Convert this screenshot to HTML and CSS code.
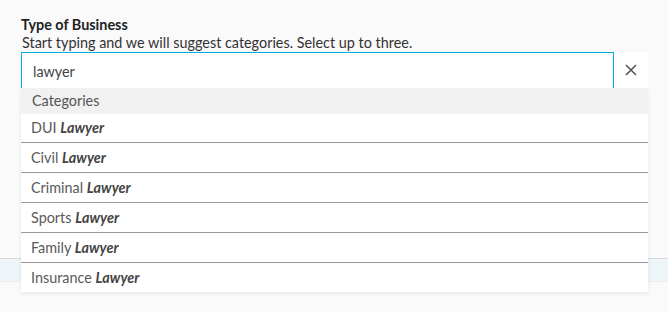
FILE: index.html
```html
<!DOCTYPE html>
<html>
<head>
<meta charset="utf-8">
<link rel="stylesheet" href="styles.css">
</head>
<body>
<div class="page">
  <div class="field">
    <div class="label">Type of Business</div>
    <div class="hint">Start typing and we will suggest categories. Select up to three.</div>
    <div class="combo">
      <div class="input-row">
        <div class="input">lawyer</div>
        <button class="clear" aria-label="Clear">
          <svg width="12" height="12" viewBox="0 0 12 12"><path d="M1 1L11 11M11 1L1 11" stroke="#555" stroke-width="1.6" fill="none"/></svg>
        </button>
      </div>
      <div class="menu">
        <div class="menu-head">Categories</div>
        <div class="opt">DUI <b>Lawyer</b></div>
        <div class="opt">Civil <b>Lawyer</b></div>
        <div class="opt">Criminal <b>Lawyer</b></div>
        <div class="opt">Sports <b>Lawyer</b></div>
        <div class="opt">Family <b>Lawyer</b></div>
        <div class="opt">Insurance <b>Lawyer</b></div>
      </div>
    </div>
  </div>
  <div class="band"></div>
</div>
</body>
</html>
```
FILE: styles.css
```css
html, body {
  margin: 0;
  padding: 0;
  background: #fafafa;
  font-family: "Lato", "Open Sans", sans-serif;
}
.page {
  width: 668px;
  height: 312px;
  overflow: hidden;
}
.field {
  padding: 16px 20px 0 21px;
}
.label {
  font-weight: 700;
  font-size: 14.4px;
  line-height: 18px;
  color: #222;
}
.hint {
  font-size: 14.4px;
  line-height: 18px;
  color: #333;
  margin-left: 1px;
}
.combo {
  position: relative;
  width: 627px;
}
.input-row {
  display: flex;
  height: 36px;
}
.input {
  flex: 1;
  box-sizing: border-box;
  border: 1px solid #00b0db;
  border-bottom: none;
  background: #fff;
  padding: 0 11px;
  font-size: 14.4px;
  line-height: 38px;
  color: #444;
}
.clear {
  width: 34px;
  height: 36px;
  border: 0;
  padding: 0;
  background: #fff;
  display: flex;
  align-items: center;
  justify-content: center;
}
.menu {
  position: absolute;
  left: 0;
  top: 36px;
  width: 627px;
  background: #fff;
  box-shadow: 0 2px 4px rgba(0,0,0,0.08);
  z-index: 2;
}
.menu-head {
  background: #f1f1f1;
  height: 26px;
  line-height: 26px;
  padding-left: 11px;
  font-size: 14.4px;
  color: #555;
}
.opt {
  height: 29px;
  line-height: 29px;
  padding-left: 10px;
  font-size: 14.4px;
  color: #5a5a5a;
  border-top: 1px solid #9a9a9a;
}
.menu-head + .opt { border-top: 0; height: 28px; line-height: 28px; }
.opt b {
  font-style: italic;
  font-weight: 700;
  color: #444;
}
.band {
  margin-top: 170px;
  height: 22px;
  border-top: 1px solid #d6dadc;
  border-bottom: 1px solid #eceeef;
  background: #eef5f9;
}
```
